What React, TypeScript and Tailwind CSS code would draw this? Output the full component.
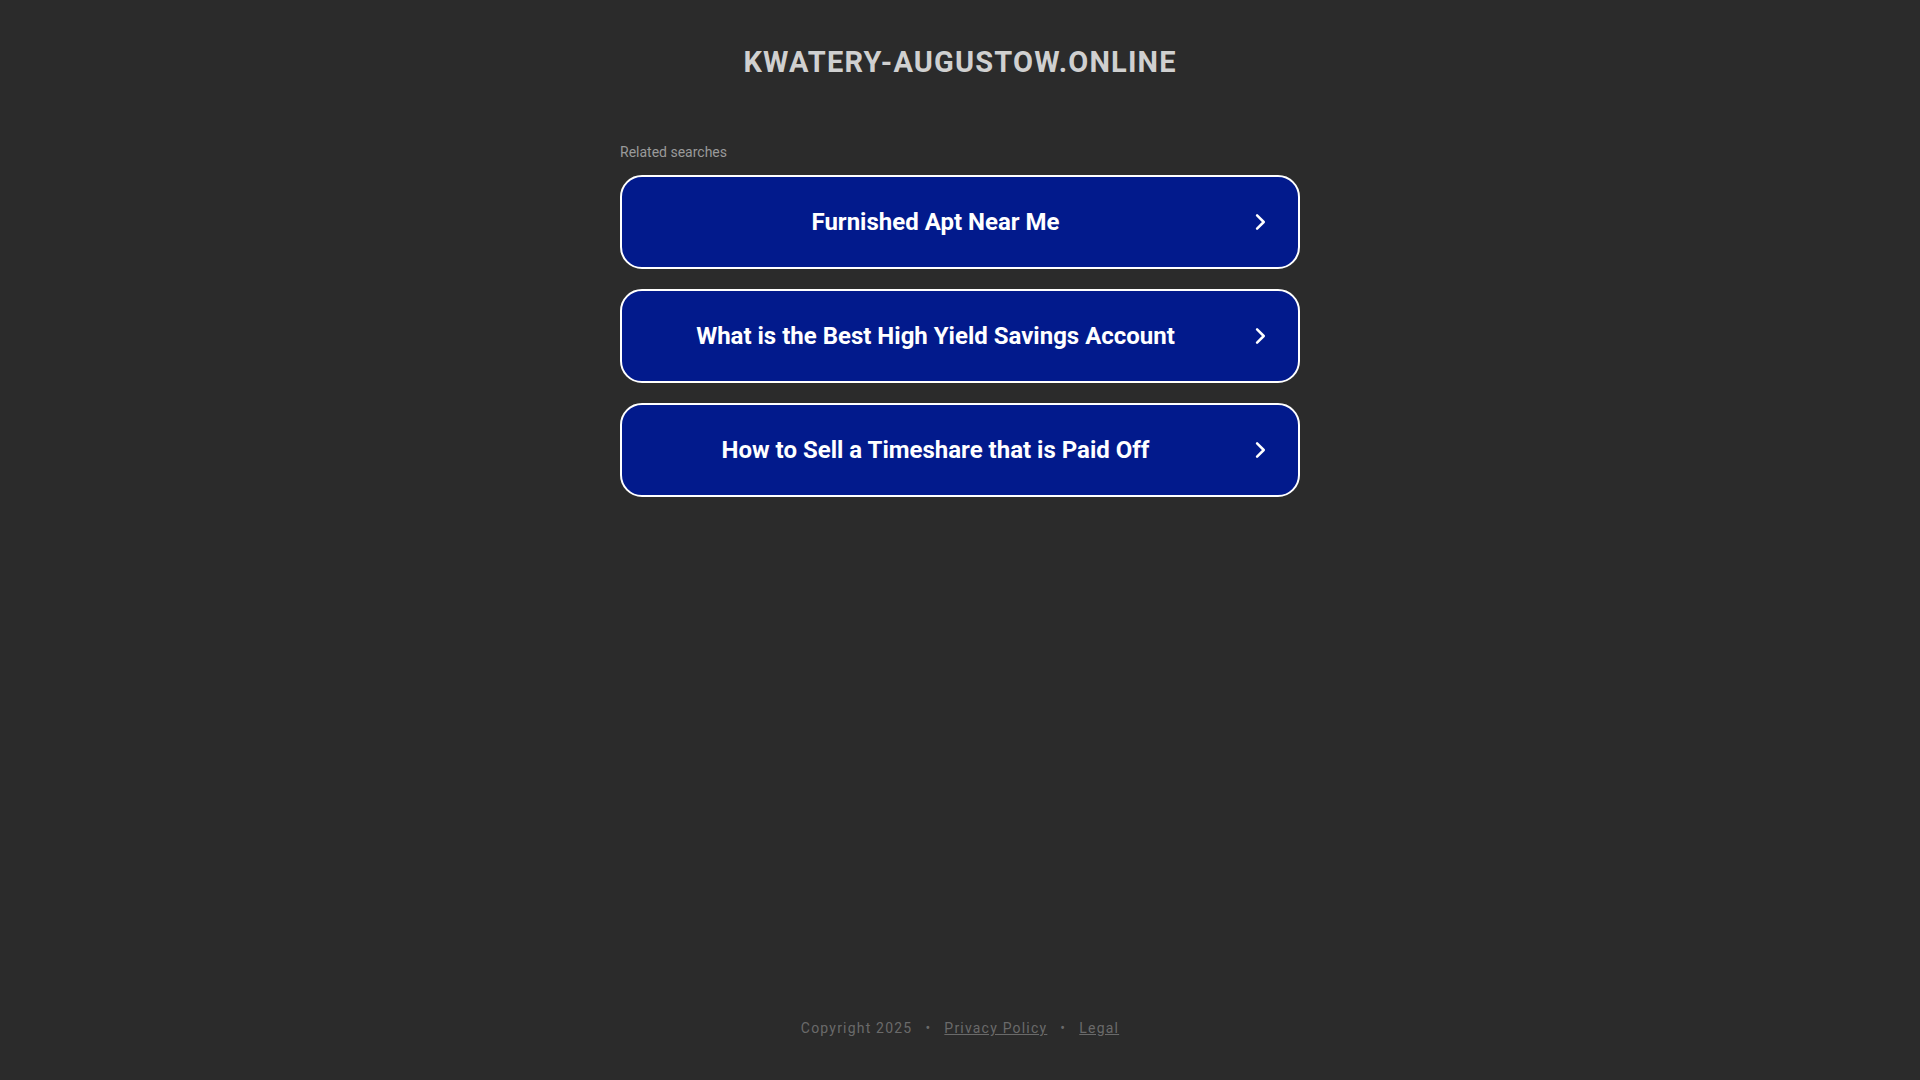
import React from 'react';

const searches = [
  'Furnished Apt Near Me',
  'What is the Best High Yield Savings Account',
  'How to Sell a Timeshare that is Paid Off',
];

const Chevron = () => (
  <svg width="20" height="20" viewBox="0 0 24 24" fill="none" stroke="white" strokeWidth="3" strokeLinecap="round" strokeLinejoin="round">
    <path d="M8.5 4l8 8-8 8" />
  </svg>
);

export default function App() {
  return (
    <div
      className="min-h-screen bg-[#2b2b2b] flex flex-col items-center"
      style={{ fontFamily: 'Roboto, "Liberation Sans", sans-serif' }}
    >
      <h1 className="mt-[45px] text-[29px] leading-[34px] font-bold tracking-[1.15px] text-[#d0d0d0] uppercase">
        kwatery-augustow.online
      </h1>

      <div className="w-[680px] mt-[65px] flex flex-col">
        <div className="text-[14px] leading-[17px] text-[#9a9a9a] mb-[14px]">Related searches</div>
        <div className="flex flex-col gap-[20px]">
          {searches.map((s) => (
            <a
              key={s}
              href="#"
              className="h-[94px] rounded-[22px] border-2 border-white bg-[#021a8c] flex items-center pl-[17px] pr-[28px] text-white"
            >
              <span className="flex-1 text-center text-[24px] font-bold">{s}</span>
              <span className="ml-[18px] flex items-center">
                <Chevron />
              </span>
            </a>
          ))}
        </div>
      </div>

      <div className="mt-auto mb-[43px] text-[14px] leading-[18px] tracking-[1.2px] text-[#6a6a6a] flex items-center gap-[13px]">
        <span>Copyright 2025</span>
        <span>•</span>
        <a href="#" className="underline">Privacy Policy</a>
        <span>•</span>
        <a href="#" className="underline">Legal</a>
      </div>
    </div>
  );
}
